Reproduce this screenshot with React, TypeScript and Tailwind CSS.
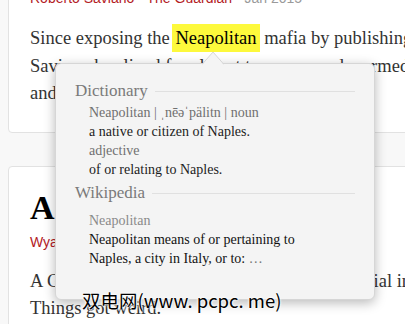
import React from "react";

const serif = "font-['Liberation_Serif',serif]";

export default function App() {
  return (
    <div className="relative w-[405px] h-[324px] overflow-hidden bg-[#f8f8f8]">
      {/* Card 1 */}
      <div className="ml-[8px] -mt-[14px] w-[460px] bg-white border border-[#e2e2e2] rounded-[4px] pl-[21px] pt-[2px] pb-[24px]">
        <div className="font-['Liberation_Sans',sans-serif] text-[14px] leading-[18px] whitespace-nowrap">
          <span className="text-[#b3201f]">Roberto Saviano</span>
          <span className="text-[#9a9a9a]"> · </span>
          <span className="text-[#b3201f]">The Guardian</span>
          <span className="text-[#9a9a9a]"> · Jan 2015</span>
        </div>
        <div className={`${serif} mt-[18px] text-[18.5px] leading-[27.5px] text-[#333] whitespace-nowrap`}>
          <div>
            Since exposing the{" "}
            <span className="-ml-[2px] bg-[#fdf93c] text-black px-[3px] py-[4px]">Neapolitan</span>{" "}
            mafia by publishing
          </div>
          <div>Saviano has lived for almost ten years under armed</div>
          <div>and has been threatened.</div>
        </div>
      </div>

      {/* Card 2 */}
      <div className="ml-[8px] mt-[33px] w-[460px] bg-white border border-[#e2e2e2] rounded-[4px] pl-[21px] pt-[21px] pb-[20px]">
        <div className={`${serif} text-[34px] leading-[40px] font-bold text-black whitespace-nowrap`}>A Grim Tale</div>
        <div className="mt-[5px] font-['Liberation_Sans',sans-serif] text-[14px] leading-[18px] text-[#b3201f] whitespace-nowrap">
          Wyatt Mason · Harper's
        </div>
        <div className={`${serif} mt-[17px] text-[18.5px] leading-[27px] text-[#333] whitespace-nowrap`}>
          <div>A Grim Tale of the Mafia: an essay from the trial in</div>
          <div>Things got weird.</div>
        </div>
      </div>

      {/* Popover */}
      <div className="absolute left-[55px] top-[63px] w-[320px] h-[237px] bg-[#f4f4f4] rounded-[6px] border border-[#d6d6d6] shadow-[0_3px_12px_rgba(0,0,0,0.28)] pl-[19px] pr-[19px] pt-[17px]">
        <svg className="absolute left-[146px] top-[-13px]" width="22" height="14" viewBox="0 0 22 14">
          <path d="M0 14 L11 1 L22 14 Z" fill="#f4f4f4" />
          <path d="M0 13.5 L11 1 L22 13.5" fill="none" stroke="#d6d6d6" strokeWidth="1" />
        </svg>
        <div className={serif}>
          <div className="flex items-center gap-[7px] h-[20px]">
            <span className="text-[17px] leading-[20px] text-[#7a7a7a]">Dictionary</span>
            <div className="flex-1 h-px bg-[#e0e0e0]" />
          </div>
          <div className="mt-[1.5px] ml-[14px] text-[14px] leading-[19px]">
            <div className="text-[#707070]">Neapolitan | ˌnēəˈpälitn | noun</div>
            <div className="text-[#1c1c1c]">a native or citizen of Naples.</div>
            <div className="text-[#707070]">adjective</div>
            <div className="text-[#1c1c1c]">of or relating to Naples.</div>
          </div>
          <div className="mt-[4.5px] flex items-center gap-[7px] h-[20px]">
            <span className="text-[17px] leading-[20px] text-[#7a7a7a]">Wikipedia</span>
            <div className="flex-1 h-px bg-[#e0e0e0]" />
          </div>
          <div className="mt-[7.5px] ml-[14px] text-[14px] leading-[19px]">
            <div className="text-[#8a8a8a]">Neapolitan</div>
            <div className="text-[#111]">Neapolitan means of or pertaining to</div>
            <div className="text-[#111]">
              Naples, a city in Italy, or to:  <span className="text-[#777]">…</span>
            </div>
          </div>
        </div>
      </div>

      {/* Watermark */}
      <div className="absolute left-[82px] top-[288px] font-['Noto_Sans_CJK_SC',sans-serif] text-[18.5px] leading-[24px] text-black whitespace-nowrap [text-shadow:0_0_2px_#fff,0_0_2px_#fff,0_0_3px_#fff]">
        双电网(www. pcpc. me)
      </div>
    </div>
  );
}
